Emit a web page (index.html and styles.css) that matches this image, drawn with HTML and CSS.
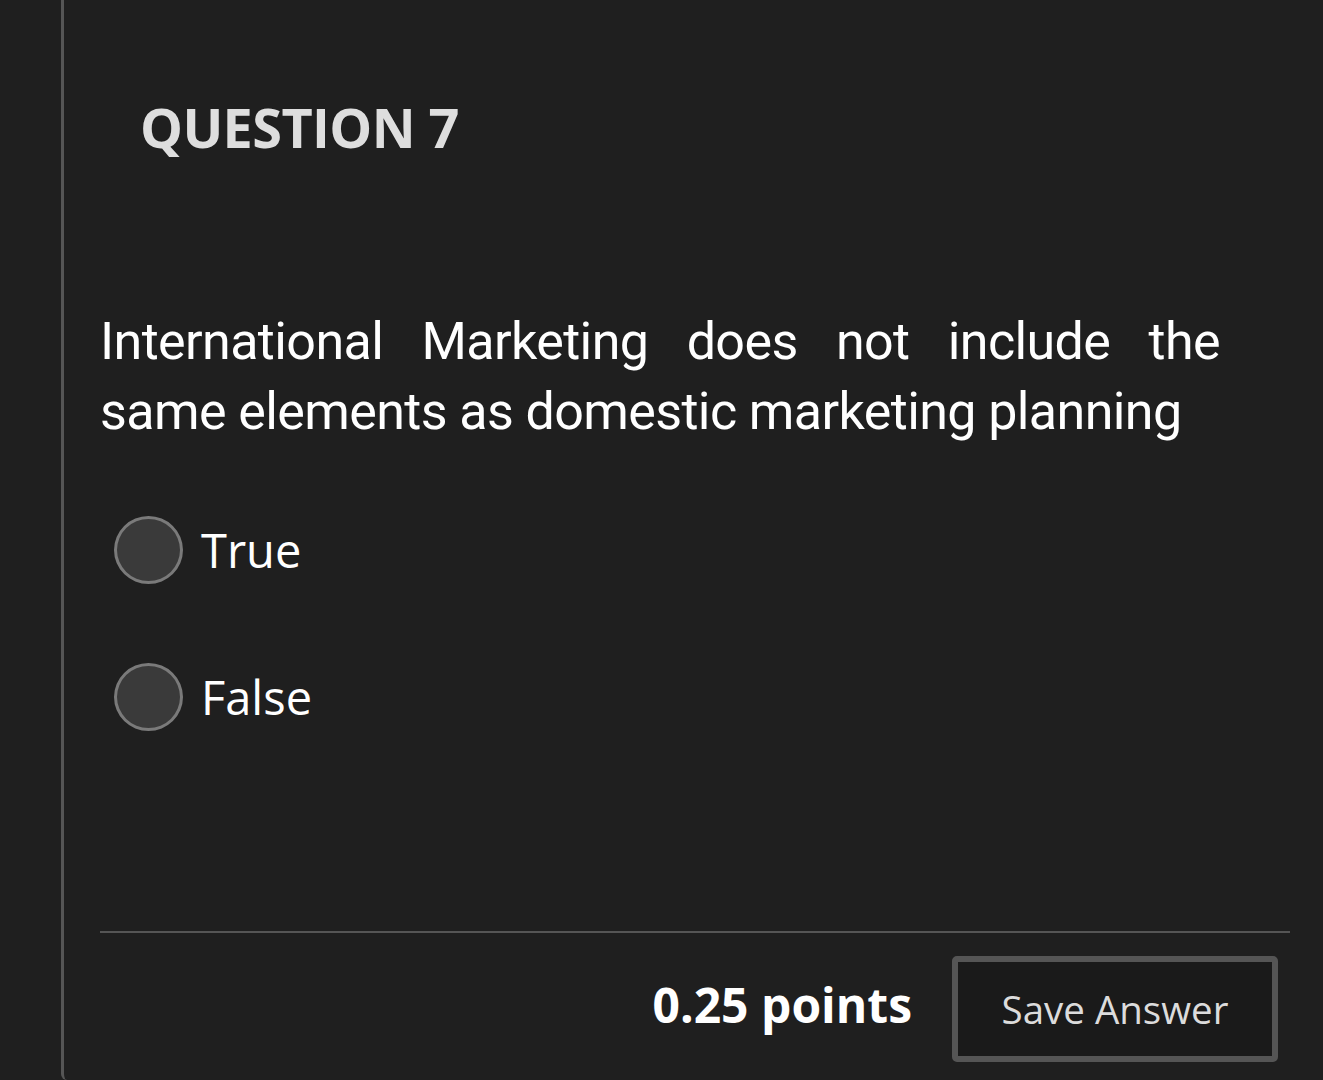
FILE: index.html
```html
<!DOCTYPE html>
<html lang="en">
<head>
<meta charset="utf-8">
<title>Question 7</title>
<link rel="stylesheet" href="styles.css">
</head>
<body>
<div class="page">
  <section class="question">
    <h2 class="q-title">QUESTION 7</h2>
    <p class="q-text">International Marketing does not include the same elements as domestic marketing planning</p>
    <div class="options">
      <label class="option"><span class="radio"></span><span class="opt-label">True</span></label>
      <label class="option"><span class="radio"></span><span class="opt-label">False</span></label>
    </div>
    <div class="footer">
      <span class="points">0.25 points</span>
      <button class="save">Save Answer</button>
    </div>
  </section>
</div>
</body>
</html>
```

FILE: styles.css
```css
html, body {
  margin: 0;
  padding: 0;
  background: #1f1f1f;
  height: 100%;
}
.page {
  height: 1080px;
  overflow: hidden;
  padding-left: 61px;
  box-sizing: border-box;
}
.question {
  height: 1080px;
  border-left: 3px solid #555;
  border-bottom-left-radius: 6px;
  padding-left: 36px;
  padding-right: 33px;
  box-sizing: border-box;
  display: flex;
  flex-direction: column;
}
.q-title {
  margin: 100px 0 0 40px;
  font-family: "Open Sans", sans-serif;
  font-weight: 700;
  font-size: 54px;
  letter-spacing: -0.6px;
  line-height: 1;
  color: #dedede;
}
.q-text {
  margin: 153px 70px 0 0;
  font-family: Roboto, sans-serif;
  font-size: 52px;
  letter-spacing: -0.6px;
  line-height: 70px;
  color: #ffffff;
  text-align: justify;
}
.options {
  display: flex;
  flex-direction: column;
  gap: 79px;
  margin-top: 69px;
  margin-left: 14px;
}
.option {
  display: flex;
  align-items: center;
  gap: 18px;
}
.radio {
  width: 63px;
  height: 62px;
  border-radius: 50%;
  border: 3px solid #7a7a7a;
  background: #3a3a3a;
  flex: none;
}
.opt-label {
  font-family: "Open Sans", sans-serif;
  font-size: 47px;
  color: #ffffff;
  line-height: 68px;
}
.footer {
  margin-top: 200px;
  border-top: 2px solid #555;
  display: flex;
  justify-content: flex-end;
  align-items: center;
  gap: 40px;
  padding-top: 23px;
  padding-right: 12px;
}
.points {
  font-family: "Open Sans", sans-serif;
  font-weight: 700;
  font-size: 48px;
  color: #ffffff;
  margin-bottom: 10px;
}
.save {
  width: 326px;
  height: 106px;
  box-sizing: border-box;
  border: 6px solid #555;
  border-radius: 5px;
  background: #1a1a1a;
  color: #dcdcdc;
  font-family: "Open Sans", sans-serif;
  font-size: 38.5px;
  padding: 0;
}
```
